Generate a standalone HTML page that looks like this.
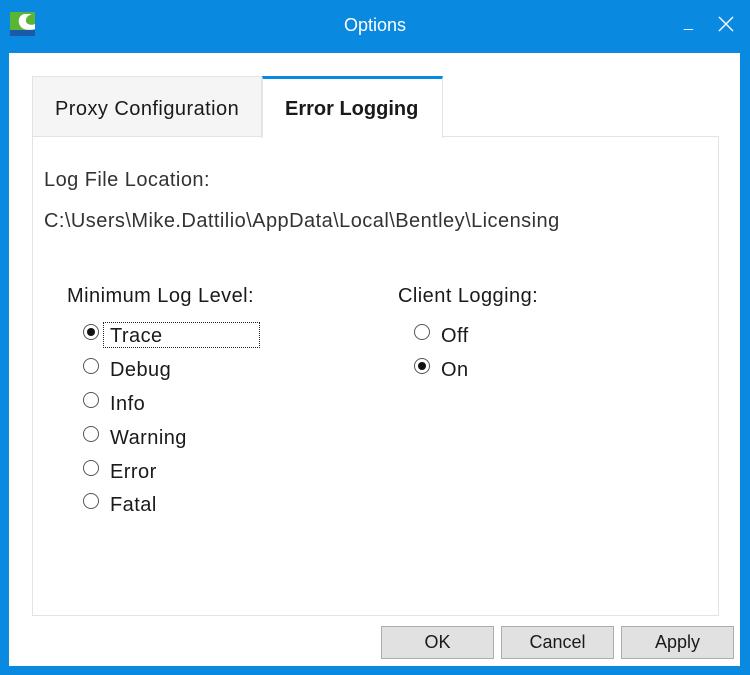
<!DOCTYPE html>
<html><head><style>
*{margin:0;padding:0;box-sizing:border-box}
body{width:750px;height:675px;background:#0a89e0;position:relative;overflow:hidden;font-family:"Liberation Sans",sans-serif;color:#1a1a1a}
.a{position:absolute}
.title{left:0;top:0;width:750px;height:53px;background:#0a89e0;color:#fff;font-size:18px;text-align:center;line-height:50px}
.client{left:9px;top:53px;width:731px;height:613px;background:#fff}
.t{font-size:20px;letter-spacing:0.45px;white-space:nowrap}
.radio{width:16px;height:16px;border:1px solid #555;border-radius:50%;background:#fff}
.radio.on::after{content:"";position:absolute;left:3px;top:3px;width:8px;height:8px;border-radius:50%;background:#111}
.btn{height:33px;width:113px;border:1px solid #adadad;background:#e1e1e1;font-size:18px;text-align:center;line-height:31px}
</style></head><body>
<div class="a title">Options</div>
<svg class="a" style="left:10px;top:12px" width="25" height="24" viewBox="0 0 25 24">
<rect width="25" height="24" fill="#1b5aa8"/>
<path d="M0 0H25V18H0Z" fill="#5bb534"/>
<path d="M14 2C7 4 7 14 14 17C16 18 22 18 25 17V12C21 14 15 12 16 8C16 5 19 3 22 2Z" fill="#fff"/>
</svg>
<div class="a" style="left:684px;top:14px;color:#fff;font-size:16px">_</div>
<svg class="a" style="left:718px;top:16px" width="16" height="16"><path d="M1 1L15 15M15 1L1 15" stroke="#fff" stroke-width="1.4"/></svg>
<div class="a client"></div>
<div class="a" style="left:32px;top:76px;width:230px;height:61px;background:#f5f5f5;border:1px solid #e3e3e3;border-bottom:none"></div>
<div class="a t" style="left:55px;top:98px">Proxy Configuration</div>
<div class="a" style="left:32px;top:136px;width:687px;height:480px;border:1px solid #e3e3e3"></div>
<div class="a" style="left:262px;top:76px;width:181px;height:62px;background:#fff;border:1px solid #e3e3e3;border-top:3px solid #0a89e0;border-bottom:none"></div>
<div class="a t" style="left:285px;top:98px;font-weight:bold;letter-spacing:0">Error Logging</div>
<div class="a t" style="left:44px;top:169px;color:#333">Log File Location:</div>
<div class="a t" style="left:44px;top:210px;color:#333">C:\Users\Mike.Dattilio\AppData\Local\Bentley\Licensing</div>
<div class="a t" style="left:67px;top:285px">Minimum Log Level:</div>
<div class="a t" style="left:398px;top:285px">Client Logging:</div>
<div class="a" style="left:103px;top:322px;width:157px;height:26px;border:1px dotted #222"></div>
<div class="a radio on" style="left:83px;top:324px"></div><div class="a t" style="left:110px;top:325px">Trace</div>
<div class="a radio" style="left:83px;top:358px"></div><div class="a t" style="left:110px;top:359px">Debug</div>
<div class="a radio" style="left:83px;top:392px"></div><div class="a t" style="left:110px;top:393px">Info</div>
<div class="a radio" style="left:83px;top:426px"></div><div class="a t" style="left:110px;top:427px">Warning</div>
<div class="a radio" style="left:83px;top:460px"></div><div class="a t" style="left:110px;top:461px">Error</div>
<div class="a radio" style="left:83px;top:493px"></div><div class="a t" style="left:110px;top:494px">Fatal</div>
<div class="a radio" style="left:414px;top:324px"></div><div class="a t" style="left:441px;top:325px">Off</div>
<div class="a radio on" style="left:414px;top:358px"></div><div class="a t" style="left:441px;top:359px">On</div>
<div class="a btn" style="left:381px;top:626px">OK</div>
<div class="a btn" style="left:501px;top:626px">Cancel</div>
<div class="a btn" style="left:621px;top:626px">Apply</div>
</body></html>
